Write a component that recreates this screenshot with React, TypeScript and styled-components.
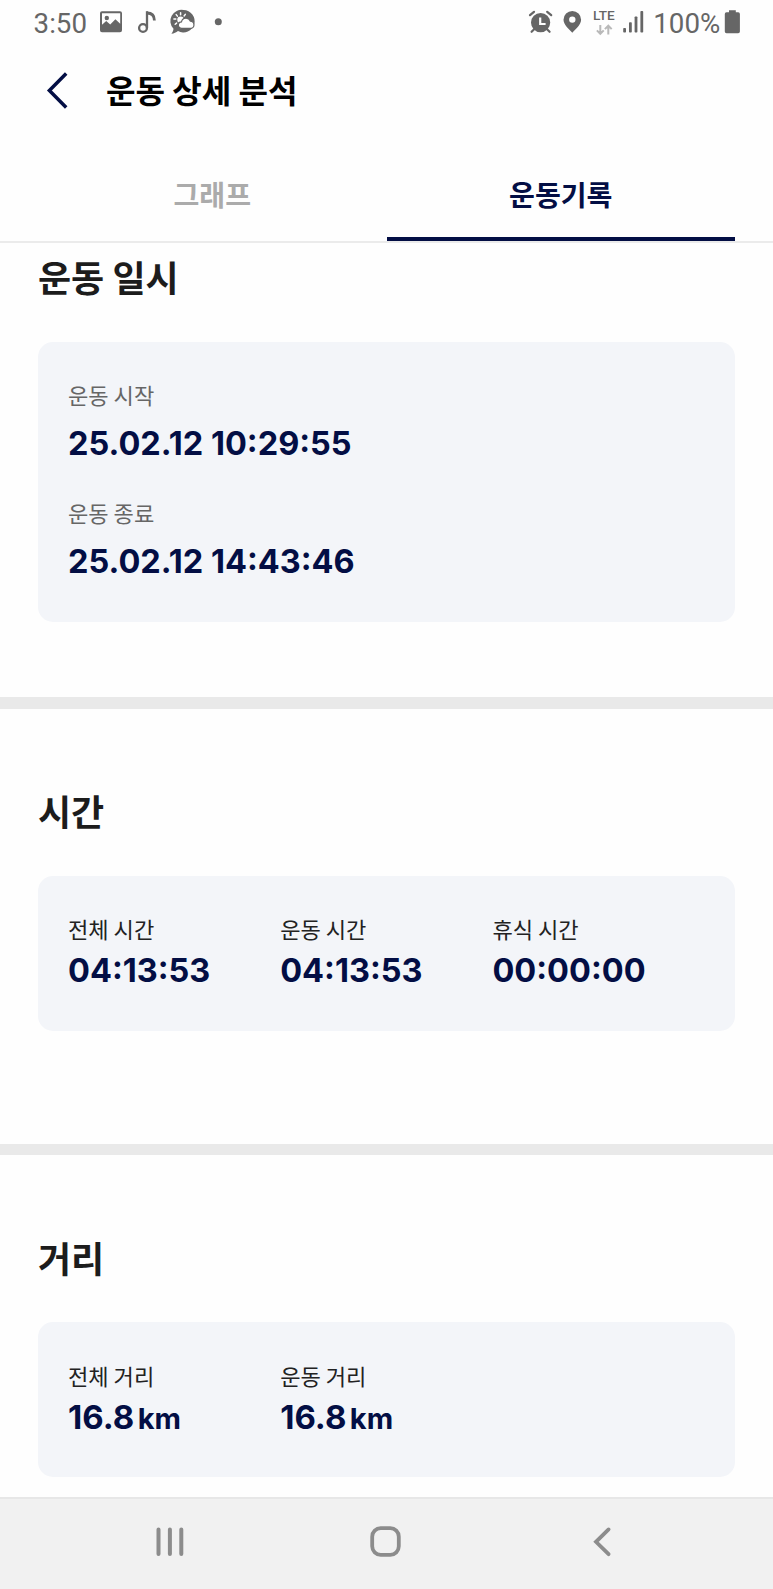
import React from 'react';
import styled, { createGlobalStyle } from 'styled-components';

const NAVY = '#030e44';
const STATUS = '#666';

const GlobalStyle = createGlobalStyle`
  * { box-sizing: border-box; }
  body { margin: 0; background: #fff; }
`;

const Screen = styled.div`
  display: flex;
  flex-direction: column;
  height: 1589px;
  overflow: hidden;
  background: #fefefe;
  font-family: "Noto Sans CJK KR", "Noto Sans", sans-serif;
`;

const StatusBar = styled.div`
  display: flex;
  justify-content: space-between;
  flex: none;
  height: 48px;
  padding: 4px 32px 0 33.6px;
  color: ${STATUS};
  svg { display: block; flex: none; }
`;

const StatusGroup = styled.div`
  display: flex;
  align-items: flex-start;
`;

const StatusText = styled.span<{ $width: number }>`
  width: ${(p) => p.$width}px;
  font: 400 27.7px/40px Roboto, sans-serif;
  white-space: nowrap;
`;

const Network = styled.span`
  width: 29px;
  padding: 4px 0 0 0;
  font: 500 13.6px/14px Roboto, sans-serif;
  svg { margin: 1.5px 0 0 3px; }
`;

const Header = styled.header`
  display: flex;
  align-items: center;
  flex: none;
  height: 48px;
  margin-top: 17px;
  padding-left: 46px;
`;

const BackButton = styled.button`
  width: 60px;
  height: 40px;
  padding: 0;
  border: 0;
  background: none;
  svg { display: block; }
`;

const PageTitle = styled.h1`
  margin: 0;
  color: #000;
  font-size: 32.1px;
  font-weight: 700;
  line-height: 48px;
`;

const Tabs = styled.nav`
  display: grid;
  grid-template-columns: 1fr 1fr;
  flex: none;
  height: 130px;
  padding: 0 38px;
  border-bottom: 2px solid #ebebeb;
`;

const Tab = styled.div<{ $active?: boolean }>`
  height: 128px;
  padding-top: 61px;
  border-bottom: 4px solid ${(p) => (p.$active ? NAVY : 'transparent')};
  color: ${(p) => (p.$active ? NAVY : '#ababab')};
  font-size: 28.1px;
  font-weight: 700;
  line-height: 40px;
  text-align: center;
`;

const Content = styled.main`
  flex: 1;
  min-height: 0;
  overflow: hidden;
`;

const Section = styled.section<{ $top: number; $bottom: number; $divider?: number }>`
  padding: ${(p) => p.$top}px 38px ${(p) => p.$bottom}px;
  border-top: ${(p) => p.$divider ?? 0}px solid #e9e9e9;
`;

const SectionTitle = styled.h2`
  margin: 0 0 43.5px;
  color: #1c1c1c;
  font-size: 36px;
  font-weight: 700;
  line-height: 44px;
`;

const Card = styled.div<{ $stacked?: boolean }>`
  display: grid;
  grid-template-columns: ${(p) => (p.$stacked ? '1fr' : 'repeat(3, 212.2px)')};
  row-gap: 32.6px;
  padding: 37.6px 0 40px 30px;
  border-radius: 15px;
  background: #f3f5f9;
`;

const Label = styled.div<{ $muted?: boolean }>`
  margin-bottom: ${(p) => (p.$muted ? 15.2 : 7.6)}px;
  color: ${(p) => (p.$muted ? '#666' : '#222')};
  font-size: 22.1px;
  line-height: 30px;
`;

const Value = styled.div<{ $large?: boolean }>`
  height: 40px;
  color: ${NAVY};
  font: 700 ${(p) => (p.$large ? 33 : 32.5)}px/40px Inter, sans-serif;
  white-space: nowrap;
`;

const Unit = styled.span`
  margin-left: 3.4px;
  font-size: 29px;
`;

const SystemNav = styled.footer`
  display: grid;
  grid-template-columns: repeat(3, 216.4px);
  justify-content: center;
  flex: none;
  height: 92px;
  padding-top: 27px;
  border-top: 2px solid #e7e7e7;
  background: #f1f1f1;
  svg { display: block; margin: 0 auto; }
`;

type Item = { label: string; value: string; unit?: string };

const Metric = ({ label, value, unit, muted }: Item & { muted?: boolean }) => (
  <div>
    <Label $muted={muted}>{label}</Label>
    <Value $large={!!unit}>
      {value}
      {unit && <Unit>{unit}</Unit>}
    </Value>
  </div>
);

const period: Item[] = [
  { label: '운동 시작', value: '25.02.12 10:29:55' },
  { label: '운동 종료', value: '25.02.12 14:43:46' },
];
const times: Item[] = [
  { label: '전체 시간', value: '04:13:53' },
  { label: '운동 시간', value: '04:13:53' },
  { label: '휴식 시간', value: '00:00:00' },
];
const distances: Item[] = [
  { label: '전체 거리', value: '16.8', unit: 'km' },
  { label: '운동 거리', value: '16.8', unit: 'km' },
];

/* The status icons share the bar's vertical coordinates, starting 4px from the top. */
const NotificationIcons = () => (
  <svg width="126" height="36" viewBox="98 4 126 36" fill={STATUS}>
    <path
      fillRule="evenodd"
      d="M102 11.3h18a2 2 0 0 1 2 2v17a2 2 0 0 1-2 2h-18a2 2 0 0 1-2-2v-17a2 2 0 0 1 2-2zM102 13.2v11.6l4.2-3.8 4 3.4 5.2-5.2 4.8 4.6V13.2z"
    />
    <circle cx="106.8" cy="18" r="2.2" />
    <g fill="none" stroke={STATUS} strokeWidth="2.3">
      <circle cx="143" cy="28" r="3.9" />
      <path d="M147 28V11.2" />
      <path d="M147 13c2.8 0 7.4.8 7.4 7.4" strokeWidth="2.8" />
    </g>
    <path d="M183.6 10a11.2 11.2 0 1 1-5.6 21c-1.8 1.4-4 2.4-6.6 2.8 1.3-1.6 2-3.2 2.1-5A11.2 11.2 0 0 1 183.6 10z" />
    <path
      d="M180.6 12.8v2M176.2 14.6l1.2 1.5M185.3 14.4l-1.2 1.6M173.9 19h1.9M175.2 24.3l1.4-1.2"
      stroke="#fff"
      strokeWidth="1.5"
      strokeLinecap="round"
    />
    <circle cx="180.6" cy="19.8" r="3.3" fill="#fff" />
    <path
      fill="#fff"
      stroke={STATUS}
      strokeWidth="1.2"
      d="M181.8 28.4a3.3 3.3 0 0 1-.3-6.6 4.6 4.6 0 0 1 8.8-.7 3.7 3.7 0 0 1 .8 7.3z"
    />
    <circle cx="218.3" cy="21.8" r="3.5" />
  </svg>
);

const AlarmAndPin = () => (
  <svg width="66" height="36" viewBox="527 4 66 36" fill={STATUS}>
    <circle cx="540.6" cy="22.6" r="9.6" />
    <g fill="none" stroke={STATUS} strokeWidth="2.2" strokeLinecap="round">
      <path d="M530 15.2l4-3.4M551.2 15.2l-4-3.4M534.4 29l-2.8 2.8M546.8 29l2.8 2.8" />
    </g>
    <path d="M540.2 17.4v6.6h5.4" fill="none" stroke="#fff" strokeWidth="2.2" />
    <path
      fillRule="evenodd"
      d="M572.3 11a8.8 8.8 0 0 1 8.8 8.8c0 4.8-5.3 9.2-8.8 13-3.5-3.8-8.8-8.2-8.8-13a8.8 8.8 0 0 1 8.8-8.8zM572.3 16.4a3.2 3.2 0 1 0 0 6.4 3.2 3.2 0 0 0 0-6.4z"
    />
  </svg>
);

const DataArrows = () => (
  <svg width="17" height="12" viewBox="596 23 17 12" fill="none" stroke="#b9b9b9" strokeWidth="2">
    <path d="M600.3 24v8.5M596.9 29.4l3.4 3.5 3.4-3.5M608.3 33.5V25M604.9 28.1l3.4-3.5 3.4 3.5" />
  </svg>
);

const Signal = () => (
  <svg width="31.3" height="36" viewBox="622 4 31.3 36" fill={STATUS}>
    <rect x="623.2" y="28" width="2.8" height="4.5" rx="0.8" />
    <rect x="629" y="22.3" width="2.8" height="10.2" rx="0.8" />
    <rect x="634.6" y="16.5" width="2.8" height="16" rx="0.8" />
    <rect x="640.4" y="11" width="2.8" height="21.5" rx="0.8" />
  </svg>
);

const Battery = () => (
  <svg width="17" height="36" viewBox="724 4 17 36" fill={STATUS}>
    <path d="M729 10.3h6.8v2h2.4a1.7 1.7 0 0 1 1.7 1.7v17.6a1.7 1.7 0 0 1-1.7 1.7h-11.7a1.7 1.7 0 0 1-1.7-1.7V14a1.7 1.7 0 0 1 1.7-1.7h2.5z" />
  </svg>
);

export default function App() {
  return (
    <Screen>
      <GlobalStyle />
      <StatusBar>
        <StatusGroup>
          <StatusText $width={64.4}>3:50</StatusText>
          <NotificationIcons />
        </StatusGroup>
        <StatusGroup>
          <AlarmAndPin />
          <Network>
            LTE
            <DataArrows />
          </Network>
          <Signal />
          <StatusText $width={70.7}>100%</StatusText>
          <Battery />
        </StatusGroup>
      </StatusBar>

      <Header>
        <BackButton aria-label="뒤로">
          <svg width="24" height="40" viewBox="46 69 24 40" fill="none" stroke={NAVY} strokeWidth="3.5">
            <path d="M66.2 73.6L49.4 90.6l16.8 17" />
          </svg>
        </BackButton>
        <PageTitle>운동 상세 분석</PageTitle>
      </Header>

      <Tabs>
        <Tab>그래프</Tab>
        <Tab $active>운동기록</Tab>
      </Tabs>

      <Content>
        <Section $top={11} $bottom={75}>
          <SectionTitle>운동 일시</SectionTitle>
          <Card $stacked>
            {period.map((m) => (
              <Metric key={m.label} {...m} muted />
            ))}
          </Card>
        </Section>
        <Section $top={79} $bottom={113.4} $divider={12}>
          <SectionTitle>시간</SectionTitle>
          <Card>
            {times.map((m) => (
              <Metric key={m.label} {...m} />
            ))}
          </Card>
        </Section>
        <Section $top={79.5} $bottom={20} $divider={11}>
          <SectionTitle>거리</SectionTitle>
          <Card>
            {distances.map((m) => (
              <Metric key={m.label} {...m} />
            ))}
          </Card>
        </Section>
      </Content>

      <SystemNav>
        <svg width="30" height="32" viewBox="0 0 30 32" fill="none" stroke="#8c8c8c" strokeWidth="4" strokeLinecap="round">
          <path d="M3.5 3.5v24.6M14.9 3.5v24.6M26.3 3.5v24.6" />
        </svg>
        <svg width="32" height="32" viewBox="0 0 32 32" fill="none" stroke="#8c8c8c" strokeWidth="3.8">
          <rect x="2.2" y="2.2" width="26.6" height="26.6" rx="8.5" />
        </svg>
        <svg width="20" height="32" viewBox="0 0 20 32" fill="none" stroke="#8c8c8c" strokeWidth="3.8" strokeLinecap="round">
          <path d="M15.6 3.4L3 15.8l12.6 12.4" />
        </svg>
      </SystemNav>
    </Screen>
  );
}
